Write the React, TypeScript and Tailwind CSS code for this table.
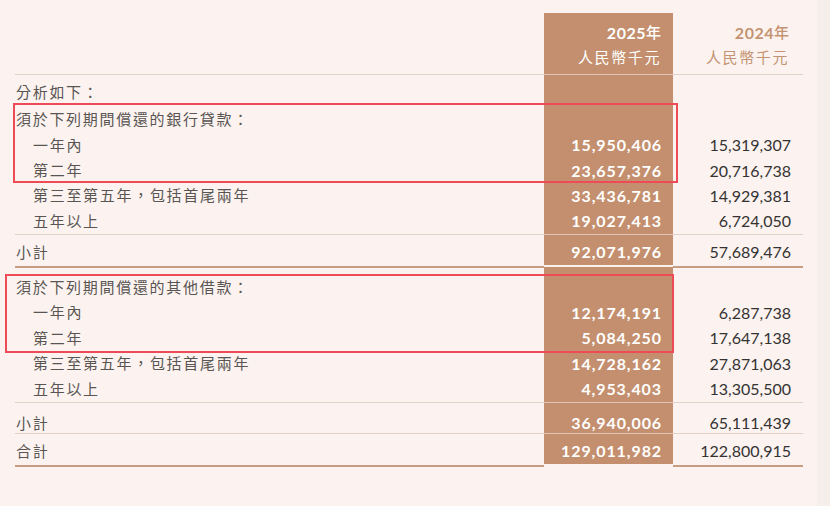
import React from 'react';

type RowProps = {
  label: string;
  cur?: string;
  prev?: string;
  indent?: boolean;
  h: string;
  pad?: string;
};

const cjk = { fontFamily: '"Noto Sans CJK TC", "Noto Sans", sans-serif' };
const num = { fontFamily: 'Lato, "Open Sans", sans-serif' };

const Row: React.FC<RowProps> = ({ label, cur, prev, indent, h, pad = '' }) => (
  <div className={`grid grid-cols-[529px_129px_130px] ${h}`}>
    <div
      className={`flex items-center ${pad} ${indent ? 'pl-[18px]' : 'pl-[1px]'} text-[15px] tracking-[1.7px] text-[#595553]`}
      style={cjk}
    >
      {label}
    </div>
    <div
      className={`flex items-center justify-end ${pad} bg-[#c48f6e] pr-[11px] text-[16px] font-bold tracking-[0.9px] text-white`}
      style={num}
    >
      {cur}
    </div>
    <div
      className={`flex items-center justify-end ${pad} pr-[12px] text-[16px] text-[#343232]`}
      style={num}
    >
      {prev}
    </div>
  </div>
);

const ThinLine: React.FC = () => (
  <div className="grid h-px grid-cols-[529px_129px_130px]">
    <div className="bg-[#e3d1c6]" />
    <div className="bg-[#e2c6b3]" />
    <div className="bg-[#e3d1c6]" />
  </div>
);

const ThickLine: React.FC = () => (
  <div className="grid h-[3px] grid-cols-[529px_129px_130px]">
    <div className="mt-px bg-[#c69c82]" />
    <div className="flex flex-col">
      <div className="h-[2px] bg-[#fbf1ec]" />
      <div className="h-px bg-[#c48f6e]" />
    </div>
    <div className="mt-px bg-[#c69c82]" />
  </div>
);

const App: React.FC = () => {
  return (
    <div className="relative flex h-[506px] w-[830px] overflow-hidden bg-[#fcf3f0]">
      <div className="flex-1 pl-[15px] pt-[13px]">
        {/* header */}
        <div className="grid h-[61px] grid-cols-[529px_129px_130px]">
          <div />
          <div className="flex flex-col items-end bg-[#c48f6e] pr-[12px] pt-[7px] text-white">
            <div className="flex h-[25px] items-center">
              <span className="text-[16px] font-bold tracking-[0.5px]" style={num}>2025</span>
              <span className="text-[15px] font-medium" style={cjk}>年</span>
            </div>
            <div className="flex h-[25px] items-center text-[15px] tracking-[1.6px]" style={cjk}>
              人民幣千元
            </div>
          </div>
          <div className="flex flex-col items-end pr-[14px] pt-[7px] text-[#c49373]">
            <div className="flex h-[25px] items-center">
              <span className="text-[16px] font-bold tracking-[0.5px]" style={num}>2024</span>
              <span className="text-[15px] font-medium" style={cjk}>年</span>
            </div>
            <div className="flex h-[25px] items-center text-[15px] tracking-[1.6px]" style={cjk}>
              人民幣千元
            </div>
          </div>
        </div>
        <ThinLine />

        <Row label="分析如下：" h="h-[31px]" pad="pt-[3px]" />
        <Row label="須於下列期間償還的銀行貸款：" h="h-[26px]" />
        <Row label="一年內" cur="15,950,406" prev="15,319,307" indent h="h-[26px]" />
        <Row label="第二年" cur="23,657,376" prev="20,716,738" indent h="h-[25px]" />
        <Row label="第三至第五年，包括首尾兩年" cur="33,436,781" prev="14,929,381" indent h="h-[25px]" />
        <Row label="五年以上" cur="19,027,413" prev="6,724,050" indent h="h-[26px]" />
        <ThinLine />
        <Row label="小計" cur="92,071,976" prev="57,689,476" h="h-[30px]" pad="pt-[4px]" />
        <ThickLine />

        <Row label="須於下列期間償還的其他借款：" h="h-[32px]" pad="pt-[7px]" />
        <Row label="一年內" cur="12,174,191" prev="6,287,738" indent h="h-[25px]" />
        <Row label="第二年" cur="5,084,250" prev="17,647,138" indent h="h-[26px]" />
        <Row label="第三至第五年，包括首尾兩年" cur="14,728,162" prev="27,871,063" indent h="h-[25px]" />
        <Row label="五年以上" cur="4,953,403" prev="13,305,500" indent h="h-[26px]" />
        <ThinLine />
        <Row label="小計" cur="36,940,006" prev="65,111,439" h="h-[30px]" pad="pt-[8px]" />
        <ThinLine />
        <Row label="合計" cur="129,011,982" prev="122,800,915" h="h-[30px]" pad="pt-[4px]" />
        <div className="grid h-[3px] grid-cols-[529px_129px_130px]">
          <div className="mt-px bg-[#c69c82]" />
          <div />
          <div className="mt-px bg-[#c69c82]" />
        </div>
      </div>
      <div className="w-[13px] bg-[#f6eeeb]" />

      {/* highlight boxes */}
      <div className="pointer-events-none absolute left-[13px] top-[103px] h-[80px] w-[665px] border-2 border-[#ee4b57]" />
      <div className="pointer-events-none absolute left-[5px] top-[274px] h-[79px] w-[669px] border-2 border-[#ee4b57]" />
    </div>
  );
};

export default App;
